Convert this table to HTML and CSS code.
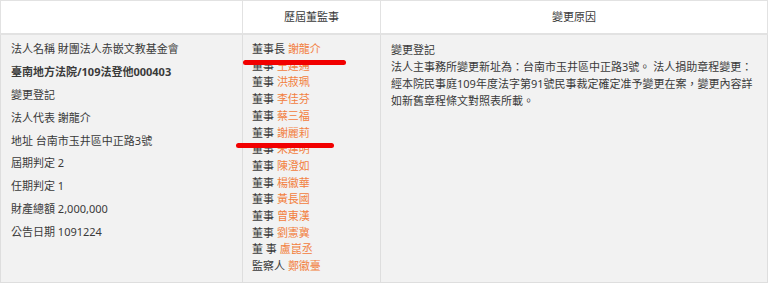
FILE: index.html
```html
<!DOCTYPE html>
<html lang="zh-Hant">
<head>
<meta charset="utf-8">
<title>歷屆董監事</title>
<link rel="stylesheet" href="styles.css">
</head>
<body>
<div class="wrap">
  <table class="tbl">
    <colgroup>
      <col class="w1"><col class="w2"><col class="w3">
    </colgroup>
    <thead>
      <tr><th></th><th>歷屆董監事</th><th>變更原因</th></tr>
    </thead>
    <tbody>
      <tr>
        <td class="info">
          <div class="item">法人名稱 財團法人赤嵌文教基金會</div>
          <div class="item bold">臺南地方法院/109法登他000403</div>
          <div class="item">變更登記</div>
          <div class="item">法人代表 謝龍介</div>
          <div class="item">地址 台南市玉井區中正路3號</div>
          <div class="item">屆期判定 2</div>
          <div class="item">任期判定 1</div>
          <div class="item">財產總額 2,000,000</div>
          <div class="item">公告日期 1091224</div>
        </td>
        <td class="board">
          <div>董事長 <span class="name">謝龍介</span></div>
          <div>董事 <span class="name">王建通</span></div>
          <div>董事 <span class="name">洪菽珮</span></div>
          <div>董事 <span class="name">李佳芬</span></div>
          <div>董事 <span class="name">蔡三福</span></div>
          <div>董事 <span class="name">謝麗莉</span></div>
          <div>董事 <span class="name">宋建明</span></div>
          <div>董事 <span class="name">陳澄如</span></div>
          <div>董事 <span class="name">楊徽華</span></div>
          <div>董事 <span class="name">黃長國</span></div>
          <div>董事 <span class="name">曾東漢</span></div>
          <div>董事 <span class="name">劉憲冀</span></div>
          <div>董 事 <span class="name">盧崑丞</span></div>
          <div>監察人 <span class="name">鄭徽臺</span></div>
        </td>
        <td class="reason">
          <div>變更登記</div>
          <div>法人主事務所變更新址為：台南市玉井區中正路3號。 法人捐助章程變更：經本院民事庭109年度法字第91號民事裁定確定准予變更在案，變更內容詳如新舊章程條文對照表所載。</div>
        </td>
      </tr>
    </tbody>
  </table>
  <div class="mark mark1"></div>
  <div class="mark mark2"></div>
</div>
</body>
</html>
```

FILE: styles.css
```css
html, body {
  margin: 0;
  padding: 0;
  background: #ffffff;
}
body {
  font-family: "Noto Sans", "Noto Sans CJK TC", sans-serif;
  font-size: 11px;
  color: #3a3a3a;
}
.wrap {
  position: relative;
  width: 767px;
}
.tbl {
  width: 767px;
  table-layout: fixed;
  border-collapse: collapse;
}
.w1 { width: 242px; }
.w2 { width: 138px; }
.w3 { width: 387px; }
.tbl th {
  height: 32px;
  padding: 0;
  font-weight: normal;
  text-align: center;
  vertical-align: middle;
  background: #ffffff;
  border: 1px solid #e2e2e2;
  border-bottom: 2px solid #e2e2e2;
  line-height: 16px;
}
.tbl td {
  background: #f2f2f2;
  border: 1px solid #dedede;
  vertical-align: top;
  padding: 6px 10px 7px 10px;
  line-height: 16.7px;
}
.item {
  margin-bottom: 6.2px;
}
.bold {
  font-weight: bold;
}
.board {
  padding-left: 9px !important;
}
.name {
  color: #f2803e;
}
.reason div {
  line-height: 17px;
}
.mark {
  position: absolute;
  height: 5px;
  background: #f20000;
  border-radius: 3px;
}
.mark1 {
  left: 243px;
  top: 60px;
  width: 103px;
}
.mark2 {
  left: 236px;
  top: 143px;
  width: 98px;
}
```
